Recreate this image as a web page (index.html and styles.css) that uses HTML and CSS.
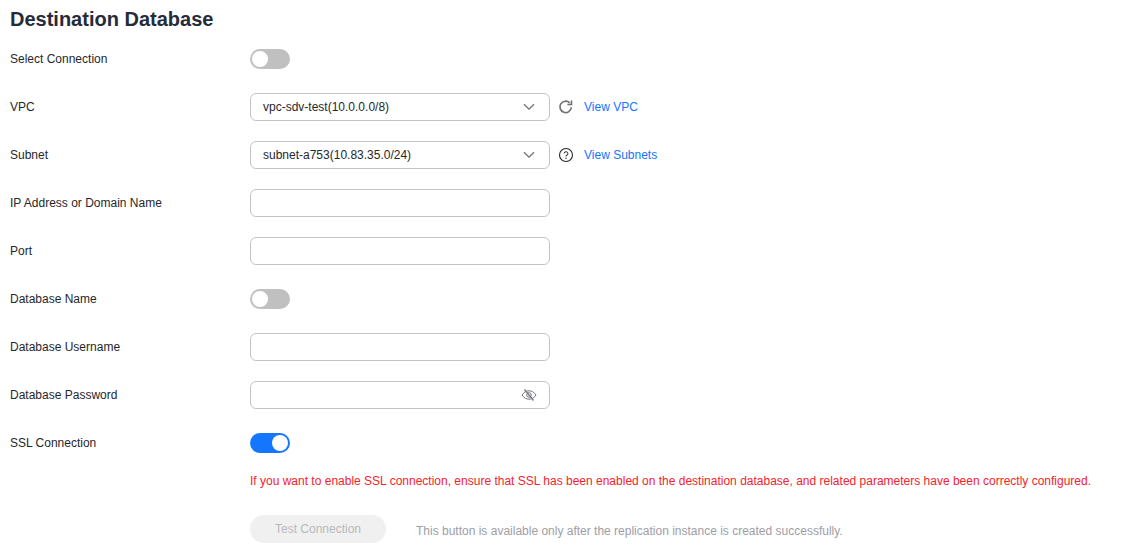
FILE: index.html
```html
<!DOCTYPE html>
<html lang="en">
<head>
<meta charset="utf-8">
<title>Destination Database</title>
<link rel="stylesheet" href="styles.css">
</head>
<body>
<main class="page">
  <h2 class="title">Destination Database</h2>
  <div class="form">
    <div class="row"><label class="label">Select Connection</label><div class="control"><span class="switch"><span class="knob"></span></span></div></div>
    <div class="row"><label class="label">VPC</label><div class="control">
      <div class="field select"><span class="value">vpc-sdv-test(10.0.0.0/8)</span>
        <svg class="chev" width="12" height="8" viewBox="0 0 12 8"><path d="M1 1.2 6 6.2 11 1.2" fill="none" stroke="#6f7076" stroke-width="1.3"/></svg></div>
      <svg class="side-icon" width="16" height="16" viewBox="0 0 16 16"><path d="M13.3 8.2A5.700 5.700 0 1 1 11.700 3.900" fill="none" stroke="#707176" stroke-width="1.6"/><path d="M13.500 1.400V5.500H9.400" fill="none" stroke="#707176" stroke-width="1.600"/></svg>
      <a class="link">View VPC</a></div></div>
    <div class="row"><label class="label">Subnet</label><div class="control">
      <div class="field select"><span class="value">subnet-a753(10.83.35.0/24)</span>
        <svg class="chev" width="12" height="8" viewBox="0 0 12 8"><path d="M1 1.2 6 6.2 11 1.2" fill="none" stroke="#6f7076" stroke-width="1.3"/></svg></div>
      <svg class="side-icon" width="16" height="16" viewBox="0 0 16 16"><circle cx="8" cy="8" r="6.500" fill="none" stroke="#26272b" stroke-width="1.100"/><path d="M6.100 6.400A1.900 1.900 0 1 1 8 8.500V9.500" fill="none" stroke="#26272b" stroke-width="1"/><circle cx="8" cy="11.300" r=".7" fill="#26272b"/></svg>
      <a class="link">View Subnets</a></div></div>
    <div class="row"><label class="label">IP Address or Domain Name</label><div class="control"><div class="field"></div></div></div>
    <div class="row"><label class="label">Port</label><div class="control"><div class="field"></div></div></div>
    <div class="row"><label class="label">Database Name</label><div class="control"><span class="switch"><span class="knob"></span></span></div></div>
    <div class="row"><label class="label">Database Username</label><div class="control"><div class="field"></div></div></div>
    <div class="row"><label class="label">Database Password</label><div class="control"><div class="field select">
      <span class="value"></span>
      <svg class="eye" width="16" height="14" viewBox="0 0 16 14"><path d="M1 7C3 4 5.300 2.800 8 2.800S13 4 15 7C13 10 10.700 11.200 8 11.200S3 10 1 7Z" fill="none" stroke="#77787d" stroke-width="1"/><circle cx="8" cy="7" r="2.300" fill="none" stroke="#77787d" stroke-width="1"/><path d="M3.500 1.500 12.500 12.500" stroke="#77787d" stroke-width="1.300"/></svg></div></div></div>
    <div class="row"><label class="label">SSL Connection</label><div class="control"><span class="switch on"><span class="knob"></span></span></div></div>
    <div class="row row-note"><span class="label"></span><div class="control"><p class="warn">If you want to enable SSL connection, ensure that SSL has been enabled on the destination database, and related parameters have been correctly configured.</p></div></div>
    <div class="row"><span class="label"></span><div class="control"><button class="btn" disabled>Test Connection</button><span class="hint">This button is available only after the replication instance is created successfully.</span></div></div>
  </div>
</main>
</body>
</html>
```
FILE: styles.css
```css
* { box-sizing: border-box; }
html, body { margin: 0; padding: 0; background: #fff; }
body { font-family: "Liberation Sans", Arial, sans-serif; font-size: 12px; color: #26272b; overflow: hidden; }
.page { padding: 0 10px; }
.title { margin: 0; height: 45px; padding-top: 7px; font-size: 20px; line-height: 24px; font-weight: 700; color: #252b3a; }
.form { display: flex; flex-direction: column; gap: 20px; }
.row { display: flex; align-items: center; height: 28px; }
.row-note { margin-top: -10px; }
.label { flex: 0 0 240px; line-height: 16px; color: #26272b; }
.control { display: flex; align-items: center; flex: 1; min-width: 0; }
.switch { display: block; width: 40px; height: 20px; border-radius: 10px; background: #c0c0c0; padding: 2px; }
.knob { display: block; width: 16px; height: 16px; border-radius: 50%; background: #fff; }
.switch.on { background: #1476ff; padding-left: 22px; }
.field { width: 300px; height: 28px; border: 1px solid #c3c3c6; border-radius: 6px; background: #fff; }
.select { display: flex; align-items: center; justify-content: space-between; padding: 0 14px 0 12px; }
.value { color: #26272b; white-space: nowrap; }
.eye { margin-right: -2px; }
.side-icon { margin-left: 8px; flex: none; }
.link { margin-left: 10px; color: #1476ff; white-space: nowrap; }
.warn { margin: 0; color: #f5222d; white-space: nowrap; }
.btn { width: 136px; height: 28px; border: 0; border-radius: 14px; background: #f0f0f0; color: #b9b9bd; font: inherit; padding: 0; }
.hint { margin-left: 30px; margin-top: 4px; color: #9d9ea6; white-space: nowrap; }
```
